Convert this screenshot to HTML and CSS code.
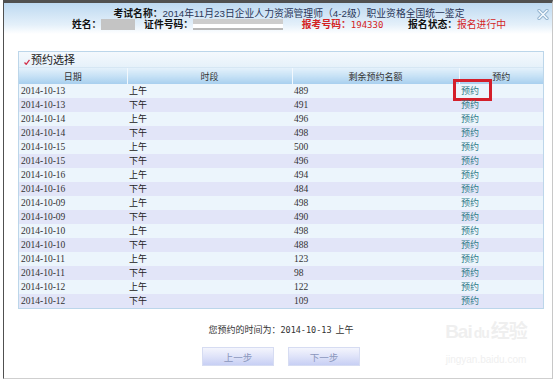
FILE: index.html
```html
<!DOCTYPE html>
<html lang="zh-CN">
<head>
    <meta charset="UTF-8">
    <meta name="viewport" content="width=device-width, initial-scale=1.0">
    <title>预约选择</title>
    <link rel="stylesheet" href="styles.css">
</head>
<body>
    <div class="window">
        <div class="head">
            <div class="head-line"><b>考试名称：</b><span class="exam">2014年11月23日企业人力资源管理师（4-2级）职业资格全国统一鉴定</span></div>
            <div class="head-line">
                <b>姓名：</b><span class="mask mask-name"></span>
                <b class="gap">证件号码：</b><span class="mask mask-id"></span>
                <b class="red gap-md">报考号码：</b><span class="red num">194330</span>
                <b class="gap-lg">报名状态：</b><span class="red">报名进行中</span>
            </div>
            <span class="close">
                <svg width="12" height="11" viewBox="0 0 12 11">
                    <path d="M2 1.5 L10 9.5 M10 1.5 L2 9.5" stroke="#8fb0cc" stroke-width="3.2" stroke-linecap="round"/>
                    <path d="M2 1.5 L10 9.5 M10 1.5 L2 9.5" stroke="#f4f9fd" stroke-width="1.6" stroke-linecap="round"/>
                </svg>
            </span>
        </div>

        <div class="content">
            <div class="panel">
                <div class="panel-title">
                    <svg class="tick" width="6" height="6" viewBox="0 0 6 6">
                        <path d="M0.5 3.5 L2.2 5.3 L5.5 0.8" stroke="#d2304a" stroke-width="1.3" fill="none"/>
                    </svg>预约选择
                </div>
                <table class="slots">
                    <colgroup>
                        <col class="c-date">
                        <col class="c-time">
                        <col class="c-left">
                        <col class="c-pick">
                    </colgroup>
                    <thead>
                        <tr><th>日期</th><th>时段</th><th>剩余预约名额</th><th>预约</th></tr>
                    </thead>
                    <tbody>
                        <tr><td>2014-10-13</td><td class="cn">上午</td><td>489</td><td><a class="book marked">预约</a></td></tr>
                        <tr><td>2014-10-13</td><td class="cn">下午</td><td>491</td><td><a class="book">预约</a></td></tr>
                        <tr><td>2014-10-14</td><td class="cn">上午</td><td>496</td><td><a class="book">预约</a></td></tr>
                        <tr><td>2014-10-14</td><td class="cn">下午</td><td>498</td><td><a class="book">预约</a></td></tr>
                        <tr><td>2014-10-15</td><td class="cn">上午</td><td>500</td><td><a class="book">预约</a></td></tr>
                        <tr><td>2014-10-15</td><td class="cn">下午</td><td>496</td><td><a class="book">预约</a></td></tr>
                        <tr><td>2014-10-16</td><td class="cn">上午</td><td>494</td><td><a class="book">预约</a></td></tr>
                        <tr><td>2014-10-16</td><td class="cn">下午</td><td>484</td><td><a class="book">预约</a></td></tr>
                        <tr><td>2014-10-09</td><td class="cn">上午</td><td>498</td><td><a class="book">预约</a></td></tr>
                        <tr><td>2014-10-09</td><td class="cn">下午</td><td>490</td><td><a class="book">预约</a></td></tr>
                        <tr><td>2014-10-10</td><td class="cn">上午</td><td>498</td><td><a class="book">预约</a></td></tr>
                        <tr><td>2014-10-10</td><td class="cn">下午</td><td>488</td><td><a class="book">预约</a></td></tr>
                        <tr><td>2014-10-11</td><td class="cn">上午</td><td>123</td><td><a class="book">预约</a></td></tr>
                        <tr><td>2014-10-11</td><td class="cn">下午</td><td>98</td><td><a class="book">预约</a></td></tr>
                        <tr><td>2014-10-12</td><td class="cn">上午</td><td>122</td><td><a class="book">预约</a></td></tr>
                        <tr><td>2014-10-12</td><td class="cn">下午</td><td>109</td><td><a class="book">预约</a></td></tr>
                    </tbody>
                </table>
            </div>

            <p class="chosen">您预约的时间为：<span class="mono">2014-10-13</span>&nbsp;&nbsp;上午</p>

            <div class="steps">
                <button class="step">上一步</button>
                <button class="step">下一步</button>
            </div>
        </div>

        <div class="watermark">
            <div class="wm-logo">Bai<span class="wm-du">du</span>经验</div>
            <div class="wm-url">jingyan.baidu.com</div>
        </div>
    </div>
</body>
</html>
```

FILE: styles.css
```css
body {
    margin: 0;
    padding: 0;
    background-color: #fff;
    font-family: "Noto Sans CJK SC", "Liberation Sans", sans-serif;
}
.window {
    position: relative;
    margin-left: 3px;
    width: 548px;
    height: 375px;
    border-top: 3px solid #505050;
    border-left: 1px solid #505050;
    border-right: 1px solid #c8c8c8;
    border-bottom: 1px solid #cfcfcf;
    background-color: #fff;
}
.head {
    position: relative;
    height: 31px;
    padding-top: 5px;
    padding-left: 22px;
    box-sizing: border-box;
    text-align: center;
    background: linear-gradient(#bdd9f1, #e4f0fa 70%, #fff);
    font-family: "Liberation Sans", "Noto Sans CJK SC", sans-serif;
    font-size: 9.8px;
    color: #222;
}
.head-line {
    height: 11px;
    line-height: 11px;
    white-space: nowrap;
}
.head-line b {
    font-weight: bold;
    color: #111;
}
.exam {
    color: #2a3658;
}
.red,
.head-line b.red {
    color: #d42424;
}
.num {
    font-family: "DejaVu Sans Mono", monospace;
    font-size: 9px;
}
.gap {
    margin-left: 6px;
}
.gap-md {
    margin-left: 16px;
}
.gap-lg {
    margin-left: 22px;
}
.mask {
    display: inline-block;
    vertical-align: -2px;
    height: 11px;
    background-color: #c4c4c4;
}
.mask-name {
    width: 34px;
}
.mask-id {
    width: 90px;
    background: linear-gradient(#cdcdcd 50%, #fff 50%, #fff 78%, #b8b8b8 78%);
}
.close {
    position: absolute;
    top: 6px;
    right: 3px;
}
.content {
    padding: 17px 8px 0 14px;
}
.panel {
    border: 1px solid #bcd6ea;
    background-color: #fff;
}
.panel-title {
    height: 16px;
    line-height: 15px;
    padding-left: 5px;
    font-size: 11px;
    color: #222;
    background: linear-gradient(#f4f9fd, #e6f1fa);
    border-bottom: 1px solid #d6e7f4;
    box-sizing: border-box;
}
.tick {
    margin-right: 1px;
    vertical-align: -1px;
}
.slots {
    width: 100%;
    border-collapse: collapse;
    table-layout: fixed;
    font-family: "Liberation Serif", "Noto Sans CJK SC", serif;
    font-size: 9.5px;
    color: #333;
}
.c-date { width: 108px; }
.c-time { width: 165px; }
.c-left { width: 167px; }
.c-pick { width: 84px; }
.slots th {
    height: 16px;
    padding: 0;
    font-family: "Noto Sans CJK SC", sans-serif;
    font-size: 9px;
    font-weight: normal;
    color: #333;
    text-align: center;
    background: linear-gradient(#e4f1fb, #c4e0f5 55%, #a8cfee);
    border-left: 1px solid #f2f8fd;
}
.slots th:first-child {
    border-left: none;
}
.slots td {
    height: 14px;
    padding: 0 0 0 2px;
    line-height: 14px;
    white-space: nowrap;
}
.slots tbody tr:nth-child(odd) {
    background-color: #ecf5fc;
}
.slots tbody tr:nth-child(even) {
    background-color: #e2e5f8;
}
.slots td.cn {
    font-family: "Noto Sans CJK SC", sans-serif;
    font-size: 9px;
    color: #222;
}
.book {
    position: relative;
    font-family: "Noto Sans CJK SC", sans-serif;
    font-size: 9px;
    color: #2d7a86;
    cursor: pointer;
}
.marked::after {
    content: "";
    position: absolute;
    left: -8px;
    top: -5px;
    width: 33px;
    height: 16px;
    border: 3px solid #d41f2a;
}
.chosen {
    margin: 15px 0 0 0;
    height: 12px;
    line-height: 12px;
    text-align: center;
    font-size: 9px;
    color: #333;
}
.mono {
    font-family: "DejaVu Sans Mono", monospace;
    font-size: 8.5px;
}
.steps {
    display: flex;
    justify-content: center;
    gap: 14px;
    margin-top: 11px;
}
.step {
    width: 72px;
    height: 19px;
    padding: 0;
    font-family: "Noto Sans CJK SC", sans-serif;
    font-size: 9.5px;
    color: #8a96bc;
    background: linear-gradient(#f4f5fd, #dfe3f9 50%, #c7cff4);
    border: 1px solid #d6dcf2;
    cursor: pointer;
}
.watermark {
    position: absolute;
    left: 432px;
    top: 314px;
    width: 100px;
    text-align: center;
    color: #efefef;
    font-family: "Liberation Sans", "Noto Sans CJK SC", sans-serif;
    pointer-events: none;
}
.wm-logo {
    font-size: 19px;
    font-weight: bold;
    line-height: 30px;
    letter-spacing: -1px;
}
.wm-du {
    font-size: 14px;
    padding: 0 2px;
}
.wm-url {
    margin-top: 6px;
    font-size: 10px;
    line-height: 12px;
}
```
